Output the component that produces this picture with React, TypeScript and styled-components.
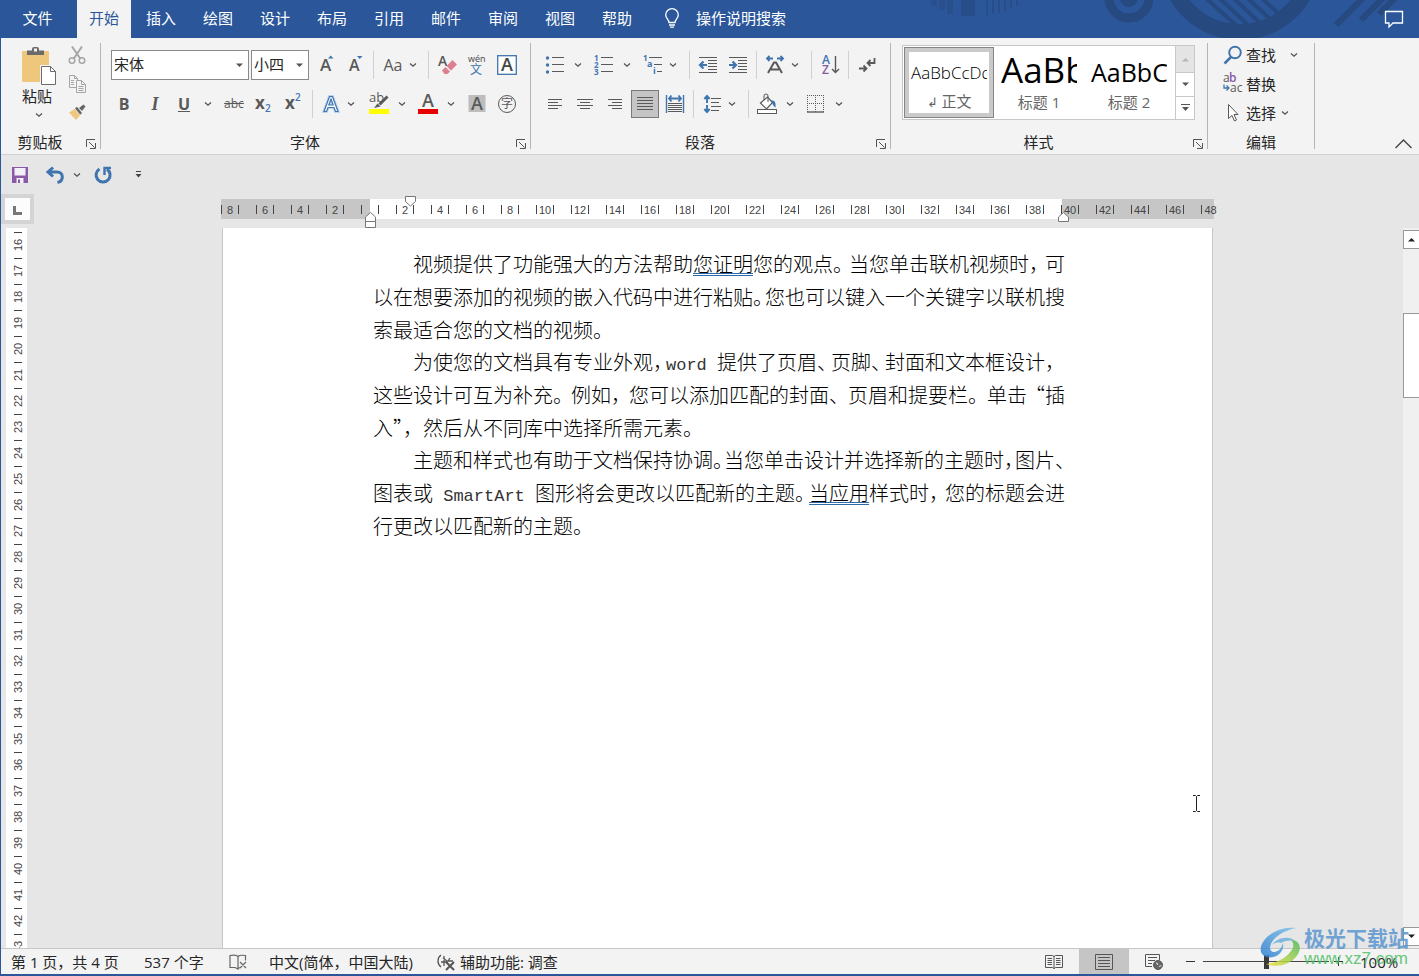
import React from 'react';
import styled, { createGlobalStyle, css } from 'styled-components';

const UI = `"Open Sans", "Noto Sans CJK SC", sans-serif`;
const GRAY = '#595959';
const BLUE = '#3f74ad';
const PURPLE = '#8a5aa8';
const BRAND = '#2b579a';

const Global = createGlobalStyle`
  *, *::before, *::after { box-sizing: border-box; }
  body { margin: 0; font-family: ${UI}; font-size: 15px; color: #262626; background: #e6e6e6; }
  button, select, input { font: inherit; color: inherit; }
  button { background: none; border: 0; padding: 0; cursor: default; }
  svg { display: block; flex: none; overflow: visible; }
`;

const Shell = styled.div`
  display: flex;
  flex-direction: column;
  height: 100vh;
  overflow: hidden;
  position: relative;
  border-left: 1px solid ${BRAND};
  border-bottom: 2px solid ${BRAND};
  background: #e6e6e6;
`;

/* ---------- title bar ---------- */
const TitleBar = styled.header`
  display: flex;
  align-items: stretch;
  height: 38px;
  flex: none;
  position: relative;
  background: ${BRAND};
  color: #fff;
`;
const Decor = styled.svg`
  position: absolute;
  right: 0;
  top: 0;
  overflow: hidden;
`;
const TabList = styled.nav`
  display: flex;
  gap: 3px;
`;
const Tab = styled.button<{ $active?: boolean; $wide?: boolean }>`
  width: ${p => (p.$wide ? 73 : 54)}px;
  line-height: 20px;
  padding-bottom: 2px;
  ${p => p.$active && css`
    background: #f3f3f3;
    color: ${BRAND};
  `}
`;
const TellMe = styled.button`
  display: flex;
  align-items: center;
  gap: 16px;
  margin-left: 20px;
  padding-bottom: 2px;
  line-height: 20px;
`;
const CommentButton = styled.button`
  display: flex;
  align-items: center;
  margin: 0 15px 0 auto;
  position: relative;
`;

/* ---------- ribbon ---------- */
const RibbonBar = styled.section`
  display: flex;
  flex: none;
  height: 117px;
  padding-top: 5px;
  background: #f3f3f3;
  border-bottom: 1px solid #d0d0d0;
`;
const Group = styled.div<{ $w: number }>`
  display: flex;
  flex-direction: column;
  width: ${p => p.$w}px;
  height: 106px;
  border-right: 1px solid #b4b4b4;
  padding-left: 10px;
`;
const GroupBody = styled.div`
  height: 92px;
  padding-top: 2px;
`;
const GroupFoot = styled.div`
  display: flex;
  align-items: center;
  height: 14px;
  margin: 0 4px 0 -10px;
  line-height: 14px;
`;
const GroupName = styled.span<{ $plain?: boolean }>`
  flex: 1;
  text-align: center;
  padding: ${p => (p.$plain ? '0 0 0 4px' : '0 7px 0 0')};
`;
const LauncherButton = styled.button`
  align-self: flex-end;
`;
const Row = styled.div`
  display: flex;
  align-items: center;
  height: 40px;
  & + & { height: 38px; }
`;
const Tool = styled.button<{ $gap?: number; $on?: boolean }>`
  display: flex;
  align-items: center;
  justify-content: center;
  width: 20px;
  height: 28px;
  margin-left: ${p => p.$gap ?? 0}px;
  color: ${GRAY};
  ${p => p.$on && css`
    width: 28px;
    background: #c5c5c5;
    border: 1px solid #7a7a7a;
  `}
`;
const ArrowTool = styled.button<{ $gap: number }>`
  width: 8px;
  height: 28px;
  margin-left: ${p => p.$gap}px;
  display: flex;
  align-items: center;
`;
const Divider = styled.span<{ $gap: number }>`
  width: 1px;
  height: 28px;
  margin-left: ${p => p.$gap}px;
  background: #d0d0d0;
`;
const ComboBox = styled.label<{ $w: number }>`
  display: grid;
  align-items: center;
  width: ${p => p.$w}px;
  height: 30px;
  margin-right: 2px;
  border: 1px solid #8a8a8a;
  background: #fff;
  > * { grid-area: 1 / 1; }
  > svg { justify-self: end; margin-right: 5px; pointer-events: none; }
`;
const ComboSelect = styled.select`
  appearance: none;
  width: 100%;
  height: 28px;
  border: 0;
  padding: 0 2px 2px;
  background: transparent;
  line-height: 20px;
`;
const Glyph = styled.span<{ $size?: number; $bold?: boolean; $italic?: boolean; $line?: string; $serif?: boolean }>`
  font-family: ${p => (p.$serif ? '"Liberation Serif", serif' : UI)};
  font-size: ${p => p.$size ?? 16}px;
  line-height: 20px;
  font-weight: ${p => (p.$bold ? 700 : 400)};
  font-style: ${p => (p.$italic ? 'italic' : 'normal')};
  text-decoration: ${p => p.$line ?? 'none'};
  white-space: nowrap;
`;

const Clip = styled.div`
  display: flex;
  gap: 10px;
  padding: 2px 0 0 10px;
`;
const PasteButton = styled.button`
  display: flex;
  flex-direction: column;
  align-items: center;
  width: 36px;
  line-height: 20px;
`;
const PasteLabel = styled.span`
  margin: 1px 4px 6px 0;
`;
const SmallTools = styled.div`
  display: flex;
  flex-direction: column;
  gap: 9px;
  margin-top: -2px;
`;

/* ---------- style gallery ---------- */
const Gallery = styled.div`
  display: flex;
  width: 293px;
  height: 75px;
  margin-left: 1px;
  border: 1px solid #c8c8c8;
  background: #fff;
`;
const StyleCard = styled.button<{ $on?: boolean }>`
  width: 90px;
  height: 71px;
  margin: 1px 0 0 ${p => (p.$on ? 1 : 0)}px;
  padding: ${p => (p.$on ? '0 3px' : '0 4px')};
  border: ${p => (p.$on ? '1px solid #858585' : '0')};
  box-shadow: ${p => (p.$on ? 'inset 0 0 0 4px #cacaca' : 'none')};
  color: #666;
`;
const Sample = styled.span<{ $size: number; $line: number; $weight?: number }>`
  display: block;
  height: 38px;
  margin: 0 3px;
  line-height: ${p => p.$line}px;
  overflow: hidden;
  white-space: nowrap;
  text-align: left;
  color: #000;
  font-size: ${p => p.$size}px;
  font-weight: ${p => p.$weight ?? 400};
`;
const StyleName = styled.span`
  display: block;
  line-height: 18px;
`;
const GalleryNav = styled.div`
  display: grid;
  grid-template-rows: 26px 24px 23px;
  width: 19px;
  margin-left: auto;
  border-left: 1px solid #c8c8c8;
`;
const GalleryStep = styled.button<{ $off?: boolean }>`
  display: grid;
  place-items: center;
  background: ${p => (p.$off ? '#e4e4e4' : '#fff')};
  & + & { border-top: 1px solid #c8c8c8; }
`;

const EditList = styled.div`
  display: flex;
  flex-direction: column;
  padding-left: 5px;
  margin-top: -5px;
`;
const EditItem = styled.button`
  display: flex;
  align-items: center;
  gap: 3px;
  height: 29px;
`;
const EditArrow = styled.span<{ $gap: number }>`
  margin-left: ${p => p.$gap}px;
`;
const CollapseButton = styled.button`
  margin: auto 7px 5px auto;
`;

/* ---------- quick access ---------- */
const QuickBar = styled.div`
  display: flex;
  align-items: center;
  flex: none;
  height: 39px;
  padding-left: 9px;
`;
const QuickButton = styled.button<{ $gap?: number }>`
  margin-left: ${p => p.$gap ?? 0}px;
`;

/* ---------- rulers and document ---------- */
const RulerRow = styled.div`
  display: flex;
  flex: none;
  height: 34px;
`;
const TabSelector = styled.button`
  width: 33px;
  height: 30px;
  flex: none;
  border: 4px solid #d4d4d4;
  background: #fcfcfc;
  display: grid;
  place-items: center;
`;
const Stage = styled.div`
  flex: 1;
  display: flex;
  justify-content: center;
  min-width: 0;
  padding-right: 2px;
  margin-right: 16px;
`;
const Ruler = styled.div`
  position: relative;
  display: flex;
  gap: 17px;
  align-items: center;
  width: 993px;
  height: 20px;
  margin-top: 5px;
  font: 11px/12px "Liberation Sans", sans-serif;
  color: #444;
  background: linear-gradient(to right, #c6c6c6 149px, #fff 149px 841px, #c6c6c6 841px);
`;
const RulerMark = styled.span<{ $last?: boolean }>`
  flex: none;
  width: 18px;
  height: 9px;
  line-height: 10px;
  text-align: center;
  border: solid #444;
  border-width: 0 ${p => (p.$last ? 0 : 1)}px 0 1px;
`;
const IndentMarker = styled.svg<{ $x: number; $y: number }>`
  position: absolute;
  left: ${p => p.$x}px;
  top: ${p => p.$y}px;
`;
const Workspace = styled.main`
  display: flex;
  flex: 1;
  min-height: 0;
`;
const SideRuler = styled.div`
  width: 21px;
  margin: 0 7px 0 5px;
  flex: none;
  overflow: hidden;
  background: #fff;
  padding-top: 4px;
  font: 11px/12px "Liberation Sans", sans-serif;
  color: #444;
`;
const SideMark = styled.div`
  display: flex;
  flex-direction: column;
  align-items: center;
  height: 26px;
  padding-left: 3px;
  &::before { content: ''; width: 8px; height: 1px; background: #444; }
`;
const SideNumber = styled.span`
  writing-mode: vertical-rl;
  transform: rotate(180deg);
  height: 24px;
  text-align: center;
`;
const PageStage = styled(Stage)`
  margin-right: 0;
`;
const Paper = styled.article`
  width: 991px;
  background: #fff;
  border: solid #c6c6c6;
  border-width: 0 1px;
  padding: 19px 0 0 150px;
`;
const Paragraph = styled.p`
  width: 692px;
  margin: 0 0 -1px;
  font-family: "Noto Sans CJK SC", sans-serif;
  font-size: 20px;
  font-weight: 300;
  line-height: 33px;
  color: #000;
`;
const Line = styled.span<{ $first?: boolean; $end?: boolean }>`
  display: block;
  height: 33px;
  white-space: nowrap;
  padding-left: ${p => (p.$first ? 40 : 0)}px;
  text-align-last: ${p => (p.$end ? 'left' : 'justify')};
`;
const Stop = styled.span<{ $w?: number; $open?: boolean }>`
  display: inline-block;
  width: ${p => p.$w ?? 20}px;
  text-align-last: ${p => (p.$open ? 'right' : 'left')};
  font-feature-settings: "halt";
`;
const Latin = styled.span`
  font-family: "Liberation Mono", monospace;
  font-size: 17px;
  color: #333;
  white-space: pre;
`;
const Hint = styled.span`
  text-decoration: underline double #2f6ba8 1px;
  text-underline-offset: 1px;
`;
const ScrollTrack = styled.div`
  display: flex;
  flex-direction: column;
  width: 16px;
  flex: none;
  padding: 2px 0;
  background: #f0f0f0;
`;
const ScrollStep = styled.button`
  display: grid;
  place-items: center;
  height: 19px;
  border: 1px solid #999;
  border-right: 0;
  background: #fff;
`;
const ScrollThumb = styled.div`
  height: 85px;
  margin: 64px 0 auto;
  border: 1px solid #999;
  border-right: 0;
  background: #fff;
`;
const IBeam = styled.svg`
  position: absolute;
  right: 218px;
  bottom: 162px;
`;

/* ---------- status bar ---------- */
const StatusBar = styled.footer`
  display: flex;
  align-items: center;
  flex: none;
  height: 26px;
  padding-left: 10px;
  border-top: 1px solid #c6c6c6;
  background: #f3f3f3;
  line-height: 20px;
  white-space: nowrap;
`;
const StatusItem = styled.button<{ $w: number }>`
  display: flex;
  align-items: center;
  gap: 5px;
  width: ${p => p.$w}px;
`;
const ViewButton = styled.button<{ $on?: boolean }>`
  display: grid;
  place-items: center;
  width: 50px;
  height: 25px;
  background: ${p => (p.$on ? '#c5c5c5' : 'transparent')};
`;
const Spacer = styled.span`
  flex: 1;
`;
const ZoomButton = styled.button<{ $gap: number }>`
  margin-left: ${p => p.$gap}px;
`;
const ZoomSlider = styled.input`
  appearance: none;
  width: 126px;
  height: 14px;
  margin: 0 0 0 7px;
  background: linear-gradient(#444, #444) center / 100% 1px no-repeat;
  &::-webkit-slider-thumb {
    appearance: none;
    width: 5px;
    height: 14px;
    background: #3a3a3a;
  }
`;
const ZoomValue = styled.button`
  width: 75px;
  padding-left: 16px;
  text-align: left;
`;

const Watermark = styled.div`
  position: absolute;
  right: 7px;
  bottom: 5px;
  display: flex;
  gap: 2px;
  opacity: 0.85;
  pointer-events: none;
`;
const MarkText = styled.div`
  display: flex;
  flex-direction: column;
  width: 108px;
  white-space: nowrap;
`;
const MarkTitle = styled.span`
  font: 700 21px/24px "Noto Sans CJK SC", sans-serif;
  color: #5b97cf;
`;
const MarkUrl = styled.span`
  font: 400 17px/20px "Liberation Sans", sans-serif;
  color: #4fbf66;
`;

/* ---------- icons ---------- */
const Chevron = () => (
  <svg width="8" height="6" viewBox="0 0 8 6"><path d="M1 1.500 4 4.300 7 1.500" fill="none" stroke="#505050" strokeWidth="1.200" /></svg>
);
const Caret = ({ up, color = '#555' }: { up?: boolean; color?: string }) => (
  <svg width="7" height="5" viewBox="0 0 7 5"><path d={up ? 'M0 4.5 3.5 1 7 4.5z' : 'M0 .5 3.5 4 7 .5z'} fill={color} /></svg>
);
const Launcher = () => (
  <svg width="10" height="10" viewBox="0 0 10 10" fill="none" stroke="#555">
    <path d="M.5 8V.5H9M3 3l5.500 5.500M9.500 4v5.500H4" />
  </svg>
);
const Ico = ({ children, s = 20 }: { children: React.ReactNode; s?: number }) => (
  <svg width={s} height={s} viewBox={`0 0 ${s} ${s}`} fill="none" stroke={GRAY} strokeWidth="1">{children}</svg>
);
const T = ({ x, y, s, c = GRAY, w = 400, children }: { x: number; y: number; s: number; c?: string; w?: number; children: string }) => (
  <text x={x} y={y} fontSize={s} fontWeight={w} fill={c} stroke="none" fontFamily='"Open Sans", "Noto Sans CJK SC", sans-serif'>{children}</text>
);

const PasteIcon = () => (
  <svg width="36" height="38" viewBox="0 0 36 38">
    <rect x="1" y="4" width="27" height="31" rx="1" fill="#eec77d" />
    <path d="M6 8V3.500h5V2a2 2 0 0 1 2-2h3a2 2 0 0 1 2 2v1.500h5V8z" fill="#6b6b6b" />
    <rect x="13" y="1.500" width="3" height="3" fill="#f3f3f3" />
    <path d="M19 18h11l6 6v14H19z" fill="#f3f3f3" />
    <path d="M20.500 19.500h9l5 5v13h-14z" fill="#fff" stroke="#6b6b6b" />
    <path d="M29.500 19.500v5h5" fill="none" stroke="#6b6b6b" />
  </svg>
);
const CutIcon = () => (
  <Ico><g stroke="#a6a6a6" strokeWidth="1.500">
    <path d="M5 1.500 13.500 14M15 1.500 6.500 14" strokeWidth="2" />
    <circle cx="5" cy="15.500" r="2.800" /><circle cx="15" cy="15.500" r="2.800" />
  </g></Ico>
);
const CopyIcon = () => (
  <Ico><g stroke="#a6a6a6">
    <path d="M9 13.500H2.500v-12h5l3 3v2" /><path d="M7.500 1.500v3h3M4 6.500h3M4 8.500h3M4 10.500h3" />
    <path d="M9.500 6.500h5l4 4v8h-9z" fill="#f3f3f3" /><path d="M14.500 6.500v4h4M11.500 12.500h5M11.500 14.500h5M11.500 16.500h5" />
  </g></Ico>
);
const BrushIcon = () => (
  <Ico><g stroke="none">
    <path d="M2 9.500 7.500 6l5.500 6.500-4 4.500z" fill="#eec77d" />
    <path d="m8 5.500 2-1.800L15 10l-1.800 1.800z" fill="#666" /><path d="m12 5 4.500-3.500 2 2L15 8z" fill="#666" />
  </g></Ico>
);
const BulbIcon = () => (
  <svg width="16" height="20" viewBox="0 0 16 20" fill="none" stroke="#fff" strokeWidth="1.300">
    <path d="M5 14.500c0-2.800-3.300-4-3.300-7.500a6.300 6.300 0 0 1 12.600 0c0 3.500-3.300 4.700-3.300 7.500zM5 17h6M6 19.200h4" />
  </svg>
);
const AlignIcon = ({ kind }: { kind: 'left' | 'center' | 'right' | 'full' }) => {
  const paths = {
    left: 'M3 5.500h14M3 8.500h10M3 11.500h14M3 14.500h10',
    center: 'M2 5.500h16M5 8.500h10M2 11.500h16M5 14.500h10',
    right: 'M3 5.500h14M7 8.500h10M3 11.500h14M7 14.500h10',
    full: 'M2 3.500h16M2 6.500h16M2 9.500h16M2 12.500h16M2 15.500h16',
  };
  return <Ico><path d={paths[kind]} /></Ico>;
};
const BulletsIcon = () => (
  <Ico>{[3, 10, 17].map(y => <g key={y}><circle cx="2.500" cy={y} r="1.700" fill={BLUE} stroke="none" /><path d={`M7 ${y - .5}h12`} /></g>)}</Ico>
);
const NumberIcon = () => (
  <Ico>{[3, 10, 17].map((y, i) => <g key={y}><T x={0} y={y + 3} s={8} c={BLUE} w={700}>{String(i + 1)}</T><path d={`M7 ${y - .5}h12`} /></g>)}</Ico>
);
const MultiIcon = () => (
  <Ico><T x={0} y={6} s={8} c={BLUE} w={700}>1</T><T x={4} y={12} s={9} c={BLUE} w={700}>a</T><T x={10} y={19} s={9} c={BLUE} w={700}>i</T>
    <path d="M6 2.500h13M11 9.500h8M14 16.500h5" /></Ico>
);
const IndentIcon = ({ out }: { out?: boolean }) => (
  <Ico><path d="M1 2.500h18M10 5.500h9M10 8.500h9M10 11.500h9M10 14.500h9M1 17.500h18" />
    <path d={out ? 'M9 10H2M5.5 6.5 2 10l3.5 3.5' : 'M1 10h7M4.5 6.5 8 10l-3.5 3.5'} stroke={BLUE} strokeWidth="2.200" /></Ico>
);
const ScaleIcon = () => (
  <Ico><path d="M3 18 9 7.500h2L17 18M6 14.500h8" strokeWidth="2" />
    <path d="M8 3.500H2M4.500 1 2 3.500 4.500 6M12 3.500h6M15.500 1 18 3.500 15.500 6" stroke={BLUE} strokeWidth="1.800" /></Ico>
);
const SortIcon = () => (
  <Ico><T x={2} y={9} s={12} c={BLUE} w={600}>A</T><T x={2} y={19} s={12} c={PURPLE} w={600}>Z</T>
    <path d="M15.500 1v16M12 14l3.500 3.500L19 14" strokeWidth="1.400" /></Ico>
);
const ReturnIcon = () => (
  <Ico><path d="M17.500 3v5H11M13.500 5 10.500 8l3 3" strokeWidth="1.800" /><path d="M2 13.500h7M6.500 10.500l3 3-3 3" strokeWidth="1.800" /></Ico>
);
const DistributeIcon = () => (
  <Ico><path d="M1.500 1v18M18.500 1v18" stroke={BLUE} strokeWidth="1.400" /><path d="M4 4.500h12M6.500 1.500 4 4.500l2.500 3M13.500 1.500l2.500 3-2.500 3" stroke={BLUE} strokeWidth="1.800" />
    <path d="M3 9.500h14M3 11.500h14M3 13.500h14M3 15.500h14M3 17.500h14" /></Ico>
);
const SpacingIcon = () => (
  <Ico><path d="M5 2v7M5 11v7M2.300 5 5 2l2.700 3M2.300 15 5 18l2.700-3" stroke={BLUE} strokeWidth="1.900" /><path d="M9 4.500h10M9 8.500h8M9 12.500h10M9 16.500h8" /></Ico>
);
const BucketIcon = () => (
  <Ico><path d="m3.500 9 7-6 5 5.500-6 6.500z" fill="#fff" strokeWidth="1.200" /><path d="M7 6V2a2 2 0 0 1 4 0v6" /><path d="M14 6.500c4-.5 5 2 4.500 7-2-1-3-3.500-4.500-7z" fill={BLUE} stroke="none" />
    <rect x=".5" y="15.500" width="19" height="4" fill="#fff" /></Ico>
);
const BordersIcon = () => (
  <Ico><path d="M1 1.500h17M1 9.500h17M1.500 1v17M9.500 1v17M17.500 1v17" strokeDasharray="1 1" /><path d="M1 18h17" strokeWidth="1.400" /></Ico>
);
const OutlineAIcon = () => (
  <Ico><path d="M3 17.500 8.500 2.500h3L17 17.500h-2.500l-1.500-4H7l-1.500 4zM7.800 11h4.400L10 5z" fill="#fff" stroke="#b8d4ee" strokeWidth="3" /><path d="M3 17.500 8.500 2.500h3L17 17.500h-2.500l-1.500-4H7l-1.500 4zM7.800 11h4.400L10 5z" fill="#fff" stroke={BLUE} strokeWidth="1.200" /></Ico>
);
const HighlightIcon = () => (
  <Ico><T x={0} y={8} s={13} w={400}>ab</T><path d="m18.500 2.500-8 8" strokeWidth="3" /><path d="m5 14 3.500-4.500 3 3z" fill={GRAY} stroke="none" /><path d="M0 17.500h20" stroke="#ffff00" strokeWidth="5" /></Ico>
);
const FontColorIcon = () => (
  <Ico><T x={4} y={13} s={18} w={600}>A</T><path d="M0 17.500h20" stroke="#e60000" strokeWidth="5" /></Ico>
);
const ShadeIcon = () => (
  <Ico><rect x="1.500" y="1" width="17" height="17" fill="#bdbdbd" stroke="none" /><T x={4} y={16} s={18} w={600}>A</T></Ico>
);
const CircleIcon = () => (
  <Ico><circle cx="10" cy="10" r="8.500" /><T x={4} y={14} s={12}>字</T></Ico>
);
const BoxAIcon = () => (
  <Ico><rect x=".7" y=".7" width="18.600" height="18.600" fill="#fff" stroke={BLUE} strokeWidth="1.300" /><T x={4} y={16} s={18} w={600} c="#444">A</T></Ico>
);
const PhoneticIcon = () => (
  <Ico><T x={1} y={7} s={9} c="#444">wén</T><T x={3} y={19} s={12} c={BLUE}>文</T></Ico>
);
const EraserIcon = () => (
  <Ico><T x={0} y={11} s={14} w={600}>A</T><path d="m4 15.500 3.500-3.500 4.500 4.500-2.500 2.500h-3z" fill="#dd7f8f" stroke="none" /><path d="m8.500 11 6-6 4.500 4.500-6 6z" fill="#dd7f8f" stroke="none" /></Ico>
);
const SizeAIcon = ({ up }: { up?: boolean }) => (
  <Ico><T x={3} y={16} s={up ? 17 : 16} w={600}>A</T><path d={up ? 'M11 3.5l2.7-3 2.8 3z' : 'M11 1h5.5L13.7 4z'} fill={BLUE} stroke="none" /></Ico>
);
const ScriptIcon = ({ sup }: { sup?: boolean }) => (
  <Ico><T x={2} y={15} s={17} w={700}>x</T><T x={12} y={sup ? 7 : 18} s={10} w={600} c={BLUE}>2</T></Ico>
);
const SearchIcon = () => (
  <Ico><circle cx="12" cy="7.500" r="5.800" stroke={BLUE} strokeWidth="1.900" /><path d="m8 12-6.500 6.500" stroke={BLUE} strokeWidth="2.500" /></Ico>
);
const ReplaceIcon = () => (
  <Ico><T x={0} y={8} s={12}>a</T><T x={6} y={8} s={12} c={PURPLE} w={600}>b</T><T x={7} y={18} s={12}>ac</T><path d="M1 10.500v3.500h5M3.500 11.500 6 14 3.500 16.500" stroke={BLUE} strokeWidth="1.300" /></Ico>
);
const PointerIcon = () => (
  <Ico><path d="M5.500 1.500v14l3.500-3 2.500 5.500 2-1-2.500-5.500h4z" fill="#fff" /></Ico>
);
const SaveIcon = () => (
  <svg width="20" height="18" viewBox="0 0 20 18"><path d="M2 1h16v16H2z" fill={PURPLE} /><path d="M4.500 2h11v7.500h-11zM6.500 12h7v5h-7z" fill="#f4f0f7" /><path d="M8 13.500h2V17H8z" fill={PURPLE} /></svg>
);
const UndoIcon = () => (
  <svg width="20" height="18" viewBox="0 0 20 18" fill="none" stroke={BLUE} strokeWidth="3"><path d="M8 1.500 3 6l5 4.500M3 6h9c7 0 7 9 .5 10.500" /></svg>
);
const RedoIcon = () => (
  <svg width="18" height="18" viewBox="0 0 18 18" fill="none" stroke={BLUE} strokeWidth="3"><path d="M5.500 3A7 7 0 1 0 13 3.200" /><path d="M17 2h-6.500v7" strokeWidth="2.400" /></svg>
);
const BookIcon = () => (
  <svg width="18" height="16" viewBox="0 0 18 16" fill="none" stroke="#666"><path d="M9 2.500C7.500.8 4 1 1 1.500v12h5l3 1.500V2.500c1.500-1.700 4-1.500 7.500-1v5M9 14.500l2-1h1M11 8l6 6M17 8l-6 6" strokeWidth="1.200" /></svg>
);
const AccessIcon = () => (
  <svg width="18" height="18" viewBox="0 0 18 18" fill="none" stroke="#555"><path d="M4 2C0 5 0 11 4 14M7 3v10M4 9h7M6 5l4 3M13 5l-2 3h5" strokeWidth="1.300" /><path d="m9 9 8 8M17 9l-8 8" strokeWidth="2" /></svg>
);
const ReadIcon = () => (
  <svg width="18" height="16" viewBox="0 0 18 16" fill="none" stroke="#555"><path d="M.5 1.500h7L9 2.500l1.500-1h7v12h-7L9 14.500l-1.500-1h-7zM9 2v13M2.500 4.500H7M2.500 6.500H7M2.500 8.500H7M2.500 10.500H7M11 4.500h4.500M11 6.500h4.500M11 8.500h4.500M11 10.500h4.500" /></svg>
);
const PrintIcon = () => (
  <svg width="18" height="16" viewBox="0 0 18 16" fill="none" stroke="#555"><path d="M.5.500h17v15H.5zM3 3.500h12M3 6.500h12M3 9.500h12M3 12.500h12" /></svg>
);
const WebIcon = () => (
  <svg width="18" height="16" viewBox="0 0 18 16" fill="none" stroke="#555"><path d="M7 12.500H.5V.500h14V6M3 3.500h9M3 6.500h7M3 9.500h4" /><circle cx="13" cy="11" r="4.500" fill="#666" /><path d="M11 9c1.500 0 2 1 1.500 2M14 13c.5-1 1.500-1.500 2.500-1" stroke="#f3f3f3" /></svg>
);

const tabs = ['开始', '插入', '绘图', '设计', '布局', '引用', '邮件', '审阅', '视图', '帮助'];
const horizontal = Array.from({ length: 29 }, (_, i) => i * 2 - 8);
const vertical = Array.from({ length: 28 }, (_, i) => i + 16);

const Arrow = ({ gap, name }: { gap: number; name: string }) => (
  <ArrowTool $gap={gap} aria-label={`${name}选项`}><Chevron /></ArrowTool>
);
const Foot = ({ name, plain }: { name: string; plain?: boolean }) => (
  <GroupFoot>
    <GroupName $plain={plain}>{name}</GroupName>
    {!plain && <LauncherButton aria-label={`${name}设置`}><Launcher /></LauncherButton>}
  </GroupFoot>
);

const Ribbon = () => (
  <RibbonBar>
    <Group $w={100}>
      <GroupBody>
        <Clip>
          <PasteButton><PasteIcon /><PasteLabel>粘贴</PasteLabel><Chevron /></PasteButton>
          <SmallTools>
            <button aria-label="剪切"><CutIcon /></button>
            <button aria-label="复制"><CopyIcon /></button>
            <button aria-label="格式刷"><BrushIcon /></button>
          </SmallTools>
        </Clip>
      </GroupBody>
      <Foot name="剪贴板" />
    </Group>

    <Group $w={430}>
      <GroupBody>
        <Row>
          <ComboBox $w={138}><ComboSelect aria-label="字体"><option>宋体</option></ComboSelect><Caret /></ComboBox>
          <ComboBox $w={58}><ComboSelect aria-label="字号"><option>小四</option></ComboSelect><Caret /></ComboBox>
          <Tool $gap={6} aria-label="增大字号"><SizeAIcon up /></Tool>
          <Tool $gap={9} aria-label="减小字号"><SizeAIcon /></Tool>
          <Divider $gap={7} />
          <Tool $gap={9}><Glyph>Aa</Glyph></Tool><Arrow gap={6} name="更改大小写" />
          <Divider $gap={11} />
          <Tool $gap={9} aria-label="清除格式"><EraserIcon /></Tool>
          <Tool $gap={9} aria-label="拼音指南"><PhoneticIcon /></Tool>
          <Tool $gap={10} aria-label="字符边框"><BoxAIcon /></Tool>
        </Row>
        <Row>
          <Tool $gap={3}><Glyph $bold>B</Glyph></Tool>
          <Tool $gap={11}><Glyph $bold $italic $serif $size={18}>I</Glyph></Tool>
          <Tool $gap={9}><Glyph $bold $line="underline">U</Glyph></Tool><Arrow gap={10} name="下划线" />
          <Tool $gap={12}><Glyph $size={12} $line="line-through">abc</Glyph></Tool>
          <Tool $gap={9} aria-label="下标"><ScriptIcon /></Tool>
          <Tool $gap={10} aria-label="上标"><ScriptIcon sup /></Tool>
          <Divider $gap={9} />
          <Tool $gap={8} aria-label="文本效果"><OutlineAIcon /></Tool><Arrow gap={6} name="文本效果" />
          <Tool $gap={14} aria-label="突出显示"><HighlightIcon /></Tool><Arrow gap={9} name="突出显示" />
          <Tool $gap={12} aria-label="字体颜色"><FontColorIcon /></Tool><Arrow gap={9} name="字体颜色" />
          <Tool $gap={12} aria-label="字符底纹"><ShadeIcon /></Tool>
          <Tool $gap={10} aria-label="带圈字符"><CircleIcon /></Tool>
        </Row>
      </GroupBody>
      <Foot name="字体" />
    </Group>

    <Group $w={360}>
      <GroupBody>
        <Row>
          <Tool $gap={4} aria-label="项目符号"><BulletsIcon /></Tool><Arrow gap={9} name="项目符号" />
          <Tool $gap={12} aria-label="编号"><NumberIcon /></Tool><Arrow gap={9} name="编号" />
          <Tool $gap={12} aria-label="多级列表"><MultiIcon /></Tool><Arrow gap={6} name="多级列表" />
          <Divider $gap={12} />
          <Tool $gap={8} aria-label="减少缩进"><IndentIcon out /></Tool>
          <Tool $gap={10} aria-label="增加缩进"><IndentIcon /></Tool>
          <Divider $gap={8} />
          <Tool $gap={8} aria-label="中文版式"><ScaleIcon /></Tool><Arrow gap={6} name="中文版式" />
          <Divider $gap={12} />
          <Tool $gap={8} aria-label="排序"><SortIcon /></Tool>
          <Divider $gap={8} />
          <Tool $gap={8} aria-label="显示编辑标记"><ReturnIcon /></Tool>
        </Row>
        <Row>
          <Tool $gap={4} aria-label="左对齐"><AlignIcon kind="left" /></Tool>
          <Tool $gap={10} aria-label="居中"><AlignIcon kind="center" /></Tool>
          <Tool $gap={10} aria-label="右对齐"><AlignIcon kind="right" /></Tool>
          <Tool $gap={6} $on aria-label="两端对齐"><AlignIcon kind="full" /></Tool>
          <Tool $gap={6} aria-label="分散对齐"><DistributeIcon /></Tool>
          <Divider $gap={8} />
          <Tool $gap={8} aria-label="行距"><SpacingIcon /></Tool><Arrow gap={6} name="行距" />
          <Divider $gap={12} />
          <Tool $gap={8} aria-label="底纹"><BucketIcon /></Tool><Arrow gap={9} name="底纹" />
          <Tool $gap={12} aria-label="边框"><BordersIcon /></Tool><Arrow gap={9} name="边框" />
        </Row>
      </GroupBody>
      <Foot name="段落" />
    </Group>

    <Group $w={317}>
      <GroupBody>
        <Gallery>
          <StyleCard $on><Sample $size={17} $line={38} $weight={300}>AaBbCcDd</Sample><StyleName><small>↲</small> 正文</StyleName></StyleCard>
          <StyleCard><Sample $size={35} $line={30} $weight={500}>AaBb</Sample><StyleName>标题 1</StyleName></StyleCard>
          <StyleCard><Sample $size={25} $line={34}>AaBbC</Sample><StyleName>标题 2</StyleName></StyleCard>
          <GalleryNav>
            <GalleryStep $off aria-label="上一行"><Caret up color="#b5b5b5" /></GalleryStep>
            <GalleryStep aria-label="下一行"><Caret /></GalleryStep>
            <GalleryStep aria-label="更多样式">
              <svg width="9" height="8" viewBox="0 0 9 8"><path d="M0 0h9v1H0zM1 3h7L4.500 7z" fill="#555" /></svg>
            </GalleryStep>
          </GalleryNav>
        </Gallery>
      </GroupBody>
      <Foot name="样式" />
    </Group>

    <Group $w={107}>
      <GroupBody>
        <EditList>
          <EditItem><SearchIcon />查找<EditArrow $gap={11}><Chevron /></EditArrow></EditItem>
          <EditItem><ReplaceIcon />替换</EditItem>
          <EditItem><PointerIcon />选择<EditArrow $gap={2}><Chevron /></EditArrow></EditItem>
        </EditList>
      </GroupBody>
      <Foot name="编辑" plain />
    </Group>
    <CollapseButton aria-label="折叠功能区">
      <svg width="17" height="10" viewBox="0 0 17 10" fill="none" stroke="#444" strokeWidth="1.400"><path d="M.5 9 8.500 1l8 8" /></svg>
    </CollapseButton>
  </RibbonBar>
);

const Document = () => (
  <Paper>
    <Paragraph>
      <Line $first>视频提供了功能强大的方法帮助<Hint>您证明</Hint>您的观点<Stop $w={16}>。</Stop>当您单击联机视频时<Stop $w={16}>，</Stop>可</Line>
      <Line>以在想要添加的视频的嵌入代码中进行粘贴<Stop $w={12}>。</Stop>您也可以键入一个关键字以联机搜</Line>
      <Line $end>索最适合您的文档的视频<Stop>。</Stop></Line>
    </Paragraph>
    <Paragraph>
      <Line $first>为使您的文档具有专业外观<Stop $w={13}>，</Stop><Latin>word </Latin>提供了页眉<Stop $w={14}>、</Stop>页脚<Stop $w={14}>、</Stop>封面和文本框设计<Stop>，</Stop></Line>
      <Line>这些设计可互为补充<Stop $w={18}>。</Stop>例如<Stop $w={18}>，</Stop>您可以添加匹配的封面<Stop $w={19}>、</Stop>页眉和提要栏<Stop $w={19}>。</Stop>单击<Stop $w={18} $open>“</Stop>插</Line>
      <Line $end>入<Stop $w={10}>”</Stop><Stop>，</Stop>然后从不同库中选择所需元素<Stop>。</Stop></Line>
    </Paragraph>
    <Paragraph>
      <Line $first>主题和样式也有助于文档保持协调<Stop $w={11}>。</Stop>当您单击设计并选择新的主题时<Stop $w={11}>，</Stop>图片<Stop $w={10}>、</Stop></Line>
      <Line>图表或<Latin> SmartArt </Latin>图形将会更改以匹配新的主题<Stop $w={14}>。</Stop><Hint>当应用</Hint>样式时<Stop $w={16}>，</Stop>您的标题会进</Line>
      <Line $end>行更改以匹配新的主题<Stop>。</Stop></Line>
    </Paragraph>
  </Paper>
);

export default function App() {
  return (
    <Shell>
      <Global />
      <TitleBar>
        <Decor width="500" height="38" viewBox="0 0 500 38" fill="none" stroke="#26497f">
          <path d="M15 0v6M23 0v10M31 0v14" strokeWidth="6" stroke="#294f8c" />
          <path d="M49 0v16" strokeWidth="14" stroke="#284d89" />
          <path d="M68 0v15M74 0v14M80 0v13M86 0v12M92 0v9M98 0v6" strokeWidth="2" stroke="#284d89" />
          <circle cx="210" cy="-2" r="20" strokeWidth="9" />
          <circle cx="210" cy="-2" r="5" strokeWidth="8" />
          <circle cx="321" cy="-41" r="73" strokeWidth="16" />
          <path d="m280-8 38 34M294-8l34 32M308-8l32 30M322-8l28 26M336-8l24 22" strokeWidth="4" />
          <path d="m417 25 30-30M442 20l26-26M460 14l22-22" strokeWidth="6" />
        </Decor>
        <TabList>
          <Tab $wide>文件</Tab>
          {tabs.map((t, i) => <Tab key={t} $active={i === 0}>{t}</Tab>)}
        </TabList>
        <TellMe><BulbIcon />操作说明搜索</TellMe>
        <CommentButton aria-label="批注">
          <svg width="20" height="18" viewBox="0 0 20 18" fill="none" stroke="#fff" strokeWidth="1.300"><path d="M1.500 1.500h17v11.500H9l-4 4V13H1.500z" /></svg>
        </CommentButton>
      </TitleBar>

      <Ribbon />

      <QuickBar>
        <QuickButton aria-label="保存"><SaveIcon /></QuickButton>
        <QuickButton $gap={15} aria-label="撤消"><UndoIcon /></QuickButton>
        <QuickButton $gap={8} aria-label="撤消历史"><Chevron /></QuickButton>
        <QuickButton $gap={13} aria-label="重复"><RedoIcon /></QuickButton>
        <QuickButton $gap={23} aria-label="自定义快速访问工具栏">
          <svg width="7" height="8" viewBox="0 0 7 8"><path d="M1 0h5v1H1zM.5 3h6L3.500 6.500z" fill="#444" /></svg>
        </QuickButton>
      </QuickBar>

      <RulerRow>
        <TabSelector aria-label="制表符">
          <svg width="9" height="12" viewBox="0 0 9 12"><path d="M1.500 3v7.500H9" fill="none" stroke="#777" strokeWidth="3" /></svg>
        </TabSelector>
        <Stage>
          <Ruler>
            {horizontal.map(n => <RulerMark key={n} $last={n === 48}>{n === 0 ? '' : Math.abs(n)}</RulerMark>)}
            <IndentMarker $x={184} $y={-3} width="11" height="11" viewBox="0 0 11 11" fill="#fff" stroke="#777"><path d="M.5.500h10v5l-5 4.500-5-4.500z" /></IndentMarker>
            <IndentMarker $x={144} $y={13} width="11" height="17" viewBox="0 0 11 17" fill="#fff" stroke="#777"><path d="M.5 9.500V5l5-4.500 5 4.500v4.500zM.5 9.500h10v6H.5z" /></IndentMarker>
            <IndentMarker $x={837} $y={13} width="11" height="11" viewBox="0 0 11 11" fill="#fff" stroke="#777"><path d="M.5 9.500V5l5-4.500 5 4.500v4.500z" /></IndentMarker>
          </Ruler>
        </Stage>
      </RulerRow>

      <Workspace>
        <SideRuler>{vertical.map(n => <SideMark key={n}><SideNumber>{n}</SideNumber></SideMark>)}</SideRuler>
        <PageStage><Document /></PageStage>
        <ScrollTrack>
          <ScrollStep aria-label="向上滚动"><Caret up color="#222" /></ScrollStep>
          <ScrollThumb />
          <ScrollStep aria-label="向下滚动"><Caret color="#222" /></ScrollStep>
        </ScrollTrack>
      </Workspace>

      <StatusBar>
        <StatusItem $w={133}>第 1 页，共 4 页</StatusItem>
        <StatusItem $w={85}>537 个字</StatusItem>
        <StatusItem $w={40} aria-label="校对"><BookIcon /></StatusItem>
        <StatusItem $w={168}>中文(简体，中国大陆)</StatusItem>
        <StatusItem $w={130}><AccessIcon />辅助功能: 调查</StatusItem>
        <Spacer />
        <ViewButton aria-label="阅读视图"><ReadIcon /></ViewButton>
        <ViewButton $on aria-label="页面视图"><PrintIcon /></ViewButton>
        <ViewButton aria-label="Web 版式视图"><WebIcon /></ViewButton>
        <ZoomButton $gap={6} aria-label="缩小"><svg width="11" height="11" viewBox="0 0 11 11"><path d="M1 5h9v1H1z" fill="#333" /></svg></ZoomButton>
        <ZoomSlider type="range" aria-label="显示比例" defaultValue={50} />
        <ZoomButton $gap={4} aria-label="放大"><svg width="11" height="11" viewBox="0 0 11 11"><path d="M1 5h9v1H1zM5 1h1v9H5z" fill="#333" /></svg></ZoomButton>
        <ZoomValue>100%</ZoomValue>
      </StatusBar>

      <IBeam width="9" height="17" viewBox="0 0 9 17" fill="none" stroke="#222"><path d="M1 .500h2.500l1 1 1-1H8M4.500 1.500v14M1 16.500h2.500l1-1 1 1H8" /></IBeam>

      <Watermark>
        <svg width="42" height="44" viewBox="0 0 42 44">
          <defs>
            <linearGradient id="sky" x1="0" y1="1" x2="1" y2="0"><stop offset="0" stopColor="#2f7fd0" /><stop offset="1" stopColor="#7cc3ea" /></linearGradient>
            <linearGradient id="leaf" x1="0" y1="1" x2="1" y2="0"><stop offset="0" stopColor="#f2e23c" /><stop offset="1" stopColor="#4dba62" /></linearGradient>
          </defs>
          <path d="M36 3C16 0-2 16 1 27c2 6 11 7 17 3 4-3 6-7 5-12-1 5-5 9-9 9-8 0-5-18 22-24z" fill="url(#sky)" />
          <path d="M12 20c4-7 17-10 23-4-6-1-11 0-14 2-4-1-7 0-9 2z" fill="#6fb2e0" />
          <path d="M6 39c12-1 21-7 25-13 3-4 3-8 0-11 8 0 11 7 7 14-5 9-19 15-32 10z" fill="url(#leaf)" />
        </svg>
        <MarkText><MarkTitle>极光下载站</MarkTitle><MarkUrl>www.xz7.com</MarkUrl></MarkText>
      </Watermark>
    </Shell>
  );
}
